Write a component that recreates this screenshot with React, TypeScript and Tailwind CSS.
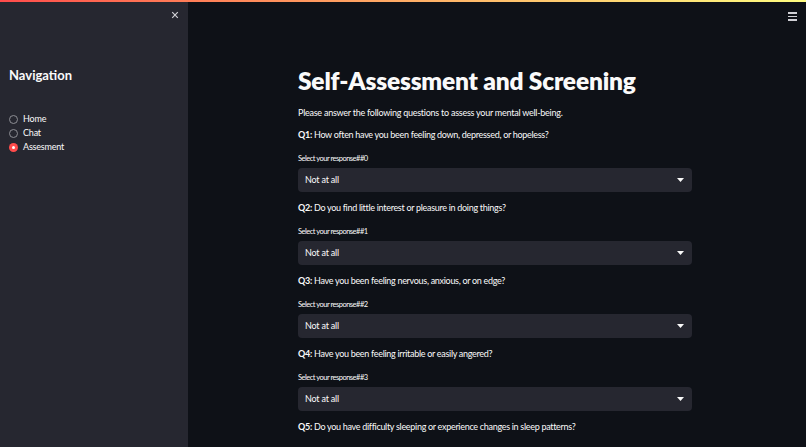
import React from "react";

const questions = [
  "How often have you been feeling down, depressed, or hopeless?",
  "Do you find little interest or pleasure in doing things?",
  "Have you been feeling nervous, anxious, or on edge?",
  "Have you been feeling irritable or easily angered?",
  "Do you have difficulty sleeping or experience changes in sleep patterns?",
];

function Chevron() {
  return (
    <svg width="7" height="4" viewBox="0 0 7 4" className="block">
      <path d="M0 0 H7 L3.5 4 Z" fill="#fafafa" />
    </svg>
  );
}

export default function App() {
  return (
    <div
      className="relative flex h-[447px] w-[806px] overflow-hidden bg-[#0e1117] text-[#fafafa]"
      style={{ fontFamily: "Lato, 'Open Sans', sans-serif" }}
    >
      <div className="absolute left-0 top-0 z-10 h-[2px] w-full bg-gradient-to-r from-[#ff4b4b] to-[#fffd80]" />
      {/* Sidebar */}
      <aside className="relative flex w-[188px] shrink-0 flex-col bg-[#262730] px-[9px]">
        <div className="flex h-[30px] justify-end pt-[11px]">
          <svg width="8" height="8" viewBox="0 0 10 10">
            <path d="M1.5 1.5 L8.5 8.5 M8.5 1.5 L1.5 8.5" stroke="#d0d0d5" strokeWidth="1.5" />
          </svg>
        </div>
        <div className="mt-[37px] text-[13px] font-bold leading-[16px]">Navigation</div>
        <div className="mt-[31px] flex flex-col gap-[4px] text-[9px] leading-[10px] tracking-[-0.2px]">
          {["Home", "Chat", "Assesment"].map((l, i) => (
            <div key={l} className="flex items-center gap-[5px]">
              {i === 2 ? (
                <span className="flex h-[9px] w-[9px] items-center justify-center rounded-full bg-[#ff4b4b]">
                  <span className="h-[3px] w-[3px] rounded-full bg-white" />
                </span>
              ) : (
                <span className="h-[9px] w-[9px] rounded-full border border-[#8d8e94]" />
              )}
              <span>{l}</span>
            </div>
          ))}
        </div>
      </aside>
      {/* Main */}
      <main className="relative flex-1 pl-[110px]">
        <div className="absolute right-[9px] top-[12px] flex flex-col gap-[2px]">
          <span className="h-[1.5px] w-[9px] bg-[#d0d0d5]" />
          <span className="h-[1.5px] w-[9px] bg-[#d0d0d5]" />
          <span className="h-[1.5px] w-[9px] bg-[#d0d0d5]" />
        </div>
        <div className="w-[394px] pt-[66px]">
          <h1 className="text-[24.5px] font-extrabold leading-[30px] tracking-[-0.2px]">
            Self-Assessment and Screening
          </h1>
          <p className="mt-[11px] text-[9px] leading-[12px] tracking-[-0.25px]">
            Please answer the following questions to assess your mental well-being.
          </p>
          {questions.map((q, i) => (
            <div key={i} className="mt-[10px]">
              <p className="text-[9px] leading-[12px] tracking-[-0.3px]">
                <span className="font-bold">Q{i + 1}:</span> {q}
              </p>
              <p className="mt-[13px] text-[7.5px] leading-[10px] tracking-[-0.5px]">
                Select your response##{i}
              </p>
              <div className="mt-[4px] flex h-[24px] items-center justify-between rounded-[4px] bg-[#262730] pl-[7px] pr-[8px]">
                <span className="text-[9px] tracking-[-0.2px]">Not at all</span>
                <Chevron />
              </div>
            </div>
          ))}
        </div>
      </main>
    </div>
  );
}
